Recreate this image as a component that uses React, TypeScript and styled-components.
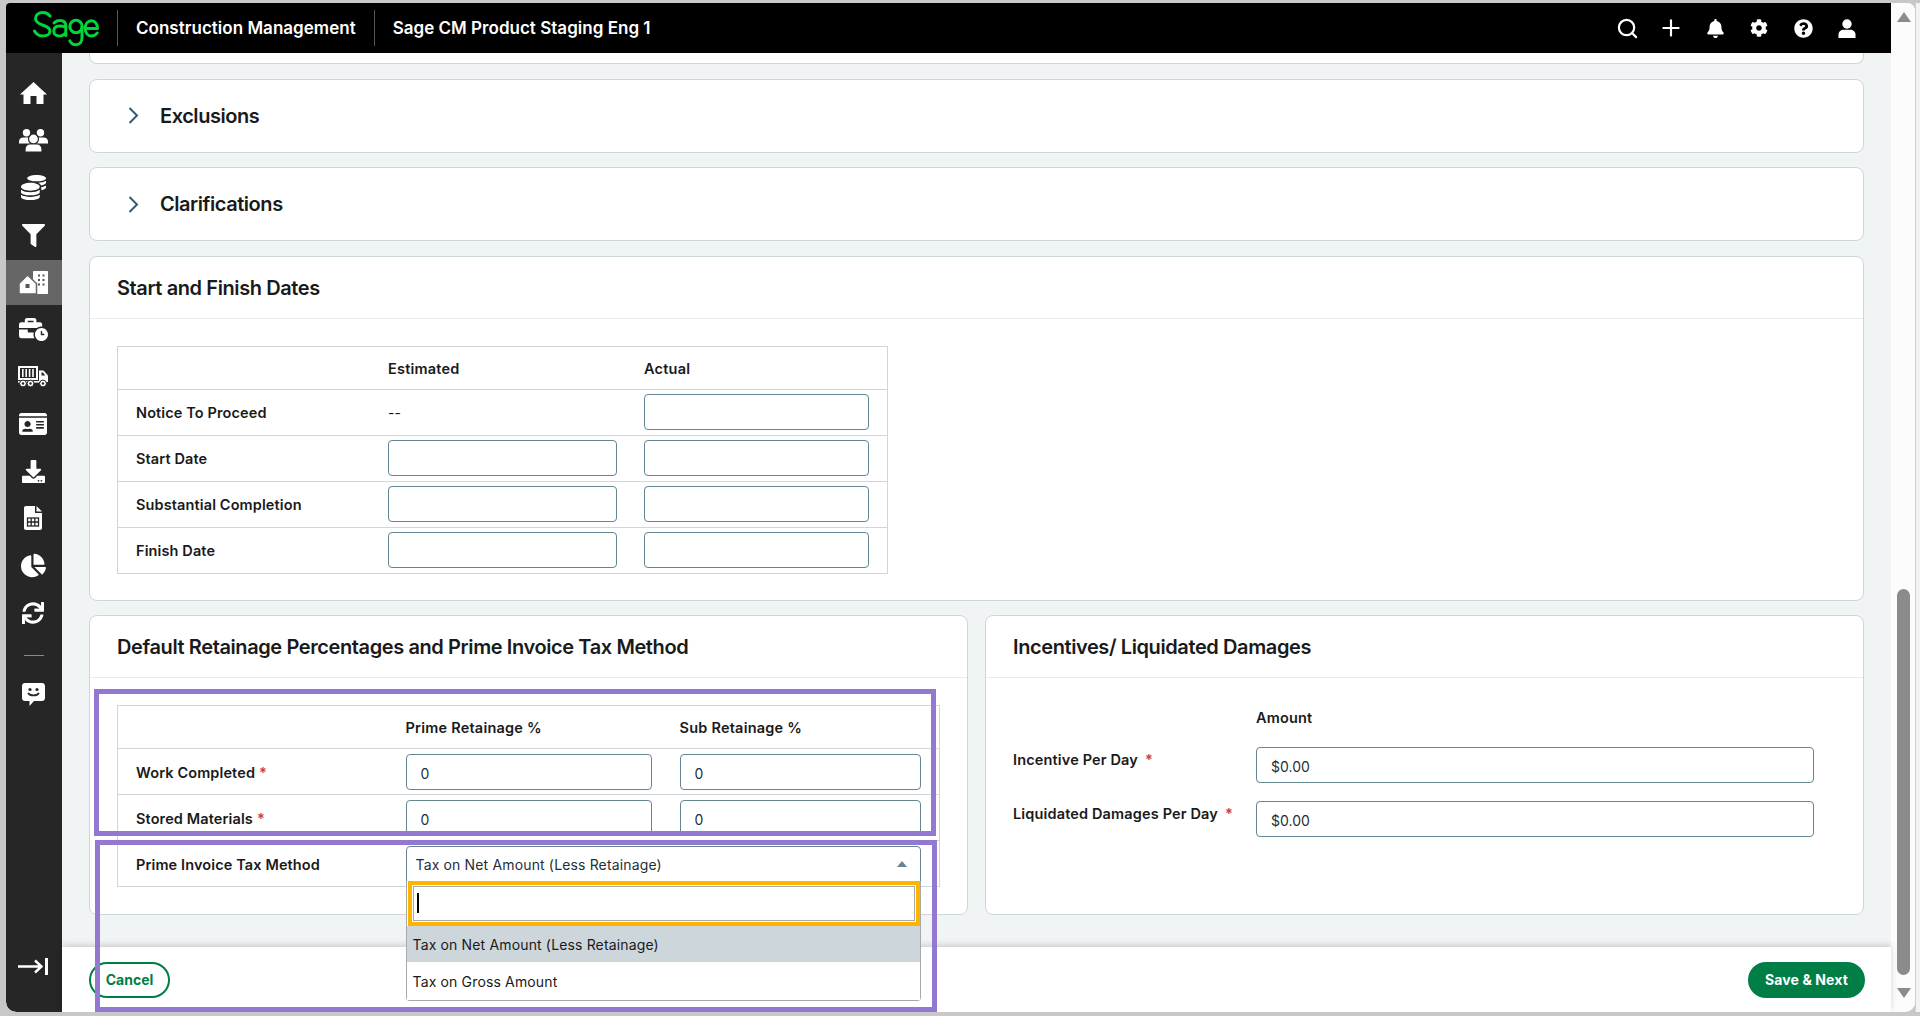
import React from "react";
import styled, { createGlobalStyle } from "styled-components";
import { Search, Plus } from "lucide-react";
import {
  FaCoins, FaFilter, FaBusinessTime, FaIdCard, FaDownload,
  FaChartPie, FaSync, FaBell, FaCog, FaQuestionCircle,
} from "react-icons/fa";

const GlobalStyle = createGlobalStyle`
  html, body { margin: 0; padding: 0; height: 100%; overflow: hidden; }
  body { font-family: Inter, "Open Sans", "Liberation Sans", sans-serif; color: #1a1a1a; }
  * { box-sizing: border-box; }
`;

const Page = styled.div`
  position: relative;
  width: 1920px;
  height: 1016px;
  padding: 3px 0 4px 6px;
  background: #c8c8c8;
  display: flex;
`;
const Win = styled.div`
  width: 1909px;
  display: flex;
  background: #fcfcfc;
  border-radius: 4px 8px 10px 10px;
  overflow: hidden;
`;
const RightEdge = styled.div`
  width: 5px;
  background: #f3f3f3;
  border-left: 1px solid #cfcfcf;
`;
const MainCol = styled.div`
  width: 1885px;
  display: flex;
  flex-direction: column;
`;
const ScrollTrack = styled.div`
  position: relative;
  flex: 1;
  background: #fcfcfc;
  display: flex;
  flex-direction: column;
  align-items: center;
  padding: 9px 0 0 1px;
`;
const ArrowUp = styled.div`
  width: 0;
  height: 0;
  border-left: 7.5px solid transparent;
  border-right: 7.5px solid transparent;
  border-bottom: 10px solid #8b8b8b;
`;
const ArrowDown = styled.div`
  width: 0;
  height: 0;
  margin-top: 13px;
  border-left: 7.5px solid transparent;
  border-right: 7.5px solid transparent;
  border-top: 10px solid #8b8b8b;
`;
const Thumb = styled.div`
  width: 13px;
  height: 386px;
  margin-top: 567px;
  border-radius: 7px;
  background: #8b8b8b;
`;

const Topbar = styled.header`
  height: 50px;
  flex: none;
  background: #000;
  color: #fff;
  display: flex;
  align-items: center;
  padding: 0 22px 0 27px;
`;
const LogoMark = styled.svg`
  width: 66px;
  height: 36px;
  margin-top: 1px;
  flex: none;
`;
const BarDivider = styled.div`
  width: 1px;
  height: 36px;
  background: #555;
  margin: 0 18px;
`;
const BarTitle = styled.span`
  font-size: 17px;
  font-weight: 600;
  letter-spacing: 0.02px;
  white-space: nowrap;
`;
const BarIcons = styled.div`
  margin-left: auto;
  display: flex;
  align-items: center;
`;
const BarIcon = styled.div`
  width: 44px;
  height: 44px;
  display: flex;
  align-items: center;
  justify-content: center;
  color: #fff;
`;

const Body = styled.div`
  flex: 1;
  min-height: 0;
  display: flex;
`;
const Sidebar = styled.nav`
  width: 56px;
  flex: none;
  background: #262626;
  color: #fff;
  border-bottom-left-radius: 10px;
  display: flex;
  flex-direction: column;
  gap: 2.2px;
  padding: 18px 0 23px;
`;
const NavItem = styled.div<{ $active?: boolean }>`
  height: 45px;
  flex: none;
  display: flex;
  align-items: center;
  justify-content: center;
  padding-right: 2px;
  background: ${(p) => (p.$active ? "#666666" : "transparent")};
`;
const NavDivider = styled.div`
  width: 20px;
  height: 1px;
  flex: none;
  margin: 18px auto 14px;
  background: #8a8a8a;
`;
const NavBottom = styled(NavItem)`
  margin-top: auto;
`;

const Content = styled.div`
  flex: 1;
  min-width: 0;
  display: flex;
  flex-direction: column;
`;
const ScrollArea = styled.main`
  height: 894px;
  flex: none;
  background: #f1f4f5;
  padding: 0 27px;
  display: flex;
  flex-direction: column;
  gap: 14.5px;
`;
const CardStub = styled.div`
  height: 11px;
  flex: none;
  background: #fff;
  border: 1px solid #ccd6db;
  border-top: none;
  border-radius: 0 0 8px 8px;
`;
const Accordion = styled.section`
  height: 74px;
  flex: none;
  background: #fff;
  border: 1px solid #ccd6db;
  border-radius: 8px;
  display: flex;
  align-items: center;
  padding-left: 38px;
  gap: 21px;
`;
const AccordionTitle = styled.h3`
  margin: 0;
  font-size: 20px;
  font-weight: 600;
  letter-spacing: -0.45px;
  color: #1a1a1a;
`;
const Card = styled.section<{ $h?: number }>`
  background: #fff;
  border: 1px solid #ccd6db;
  border-radius: 8px;
  flex: none;
  height: ${(p) => (p.$h ? `${p.$h}px` : "auto")};
`;
const CardHeader = styled.div`
  height: 62px;
  padding: 1px 0 0 27px;
  border-bottom: 1px solid #e6ebed;
  display: flex;
  align-items: center;
`;
const CardTitle = styled.h2`
  margin: 0;
  font-size: 20px;
  font-weight: 600;
  letter-spacing: -0.4px;
  color: #1a1a1a;
  white-space: nowrap;
`;
const CardBody = styled.div`
  padding: 27px;
`;
const TwoCards = styled.div`
  display: grid;
  grid-template-columns: 879px 879px;
  gap: 17px;
  height: 299px;
  margin-top: -0.5px;
  flex: none;
`;
const GridTable = styled.div<{ $w: number }>`
  width: ${(p) => p.$w}px;
  border: 1px solid #ccd6db;
  border-bottom: none;
`;
const TRow = styled.div<{ $cols: string; $h: number }>`
  display: grid;
  grid-template-columns: ${(p) => p.$cols};
  height: ${(p) => p.$h}px;
  align-items: center;
  border-bottom: 1px solid #ccd6db;
`;
const RowLabel = styled.div`
  padding: 1px 0 0 18px;
  font-size: 14.5px;
  font-weight: 600;
  letter-spacing: 0.12px;
  white-space: nowrap;
`;
const HeadCell = styled.div`
  padding-top: 1px;
  font-size: 14.5px;
  font-weight: 600;
  letter-spacing: 0.22px;
  white-space: nowrap;
`;
const PlainCell = styled.div`
  font-size: 14px;
`;
const Star = styled.span`
  color: #cd384b;
  margin-left: 4px;
`;
const Field = styled.input<{ $w: number }>`
  display: block;
  width: ${(p) => p.$w}px;
  height: 36px;
  padding: 3px 0 0 14px;
  border: 1px solid #668592;
  border-radius: 4px;
  background: #fff;
  font-family: inherit;
  font-size: 14px;
  color: #1f2f38;
  outline: none;
`;
const SelectWrap = styled.div`
  position: relative;
  width: 515px;
`;
const SelectBox = styled.div`
  height: 36px;
  padding: 1px 0 0 9px;
  border: 1px solid #668592;
  border-radius: 4px 4px 0 0;
  background: #fff;
  display: flex;
  align-items: center;
  font-size: 14px;
  letter-spacing: 0.15px;
  color: #1f2f38;
`;
const Caret = styled.span`
  width: 0;
  height: 0;
  margin-left: auto;
  margin-right: 13px;
  border-left: 5px solid transparent;
  border-right: 5px solid transparent;
  border-bottom: 6px solid #668592;
`;
const Dropdown = styled.div`
  position: absolute;
  z-index: 5;
  left: 0;
  right: 0;
  top: 35px;
  height: 120px;
  background: #fff;
  border: 1px solid #a8a8a8;
  border-top: none;
  border-radius: 0 0 4px 4px;
`;
const SearchOuter = styled.div`
  height: 45px;
  margin-left: 1px;
  border: 4px solid #ffb500;
  padding: 1px;
  background: #fff;
`;
const SearchInner = styled.div`
  height: 100%;
  border: 1px solid #a8a8a8;
  display: flex;
  align-items: center;
  padding-left: 3px;
`;
const TextCursor = styled.span`
  width: 2px;
  height: 20px;
  background: #000;
`;
const Option = styled.div<{ $selected?: boolean; $h: number }>`
  height: ${(p) => p.$h}px;
  display: flex;
  align-items: center;
  padding: 1px 0 0 6px;
  font-size: 14px;
  letter-spacing: 0.15px;
  color: #1a1a1a;
  background: ${(p) => (p.$selected ? "#ccd6db" : "#fff")};
`;
const AmountGrid = styled.div`
  display: grid;
  grid-template-columns: 243px 558px;
  grid-template-rows: 21px 36px 36px;
  row-gap: 18px;
  padding: 30px 0 0 27px;
`;
const AmountHead = styled.div`
  grid-column: 2;
  font-size: 14.5px;
  font-weight: 600;
  line-height: 20px;
  letter-spacing: 0.15px;
`;
const AmountLabel = styled.div`
  grid-column: 1;
  font-size: 14.5px;
  font-weight: 600;
  line-height: 20px;
  padding-top: 3px;
  letter-spacing: 0.15px;
  white-space: nowrap;
`;
const AmountStar = styled(Star)`
  margin-left: 7px;
`;
const Footer = styled.footer`
  position: relative;
  z-index: 1;
  flex: 1;
  background: #fff;
  box-shadow: 0 -2px 6px rgba(0, 0, 0, 0.16);
  display: flex;
  align-items: center;
  justify-content: space-between;
  padding: 0 26px 0 27px;
`;
const PillOutline = styled.button`
  height: 36px;
  width: 81px;
  border: 2px solid #007e45;
  border-radius: 18px;
  background: #fff;
  color: #007e45;
  font-family: inherit;
  font-size: 14px;
  font-weight: 700;
  padding: 0;
`;
const PillSolid = styled.button`
  height: 36px;
  width: 117px;
  border: none;
  border-radius: 18px;
  background: #007e45;
  color: #fff;
  font-family: inherit;
  font-size: 14px;
  font-weight: 700;
  letter-spacing: 0.1px;
  padding: 0;
`;
const Annotation = styled.div<{ $x: number; $y: number; $w: number; $h: number }>`
  position: absolute;
  z-index: 10;
  left: ${(p) => p.$x}px;
  top: ${(p) => p.$y}px;
  width: ${(p) => p.$w}px;
  height: ${(p) => p.$h}px;
  border: 5px solid #9278d0;
  pointer-events: none;
`;

const SageLogo = () => (
  <LogoMark viewBox="0 0 66 36" fill="none" stroke="#00d639" strokeWidth="3" strokeLinecap="round" strokeLinejoin="round">
    <path d="M17 5C15 2.5 12.5 1.5 10 1.5 5.5 1.5 2.5 4 2.5 7.5 2.5 11 5.5 12.5 9.5 14 14 15.5 17 17 17 20 17 23 14 25 10 25 6 25 3 23 1.5 20" />
    <path d="M21 12C22.5 10.3 24.5 9.5 27 9.5 30.5 9.5 32.8 11.5 32.8 15V24.5M32.8 16C30.5 15.3 28.5 15 26.5 15 23 15 20.8 16.8 20.8 20 20.8 23 23 25 26 25 29 25 31.5 23.5 32.8 21.5" />
    <circle cx="43" cy="15.5" r="6.2" />
    <path d="M49 16V26.5C49 31 46.5 33.8 43 33.8 40 33.8 37.8 32.3 36.8 29.8" />
    <path d="M52.2 17.5H64.5C64.5 13 62 9.7 58.4 9.7 54.8 9.7 52.2 13 52.2 17.5 52.2 21.7 54.8 25 58.6 25 60.8 25 62.8 24 64.2 22" />
  </LogoMark>
);

const UserIcon = () => (
  <svg width="18" height="19" viewBox="0 0 18 19" fill="#fff">
    <circle cx="9" cy="5" r="4.7" />
    <path d="M0.5 19V15.5C0.5 12.5 3 10.7 6 10.7H12C15 10.7 17.5 12.5 17.5 15.5V19Z" />
  </svg>
);

const HomeIcon = () => (
  <svg width="27" height="24" viewBox="0 0 27 24" fill="#fff">
    <path d="M13.5 0 27 12.5H23.5V22H16.5V14H10.5V22H3.5V12.5H0Z" />
  </svg>
);

const UsersIcon = () => (
  <svg width="29" height="23" viewBox="0 0 29 23" fill="#fff">
    <circle cx="7.5" cy="3.8" r="3.7" />
    <circle cx="21.5" cy="3.8" r="3.7" />
    <path d="M0 14.5V12.5C0 10 2 8.5 4.5 8.5H10.5C13 8.5 15 10 15 12.5V14.5Z" />
    <path d="M14 14.5V12.5C14 10 16 8.5 18.5 8.5H24.5C27 8.5 29 10 29 12.5V14.5Z" />
    <circle cx="14.5" cy="10" r="5" stroke="#262626" strokeWidth="1.2" />
    <path d="M6 23V20C6 17 8.5 15 11 15H18C20.5 15 23 17 23 20V23Z" stroke="#262626" strokeWidth="1.2" />
  </svg>
);

const BuildingIcon = () => (
  <svg width="29" height="23" viewBox="0 0 29 23" fill="#fff">
    <path d="M14 0.8C14 0.4 14.4 0 14.8 0H28C28.6 0 29 0.4 29 1V22C29 22.6 28.6 23 28 23H14Z" />
    <g fill="#555">
      <rect x="19" y="3.5" width="2" height="2" />
      <rect x="23.5" y="3.5" width="2" height="2" />
      <rect x="19" y="8" width="2" height="2" />
      <rect x="23.5" y="8" width="2" height="2" />
      <rect x="19" y="12.5" width="2" height="2" />
      <rect x="23.5" y="12.5" width="2" height="2" />
    </g>
    <path d="M0 12.5 8.5 4 17.5 12.5V23H1.5C0.6 23 0 22.4 0 21.5Z" stroke="#666" strokeWidth="1.5" />
    <rect x="6.5" y="13" width="4" height="4" fill="#555" rx="0.5" />
  </svg>
);

const TruckIcon = () => (
  <svg width="30" height="21" viewBox="0 0 30 21" fill="#fff">
    <path fillRule="evenodd" d="M1 0H20V14H0V1C0 .4.4 0 1 0ZM2 2V12H18V2Z" />
    <g>
      <rect x="4" y="3" width="1.6" height="8" />
      <rect x="7.4" y="3" width="1.6" height="8" />
      <rect x="10.8" y="3" width="1.6" height="8" />
      <rect x="14.2" y="3" width="1.6" height="8" />
    </g>
    <path d="M21 4.5H25.5L30 9.5V16H21Z" />
    <rect x="0" y="15" width="21" height="1.6" />
    <g stroke="#262626" strokeWidth="1">
      <circle cx="5" cy="17.5" r="3.4" />
      <circle cx="12.5" cy="17.5" r="3.4" />
      <circle cx="25" cy="17.5" r="3.4" />
    </g>
    <g fill="#262626">
      <circle cx="5" cy="17.5" r="1.2" />
      <circle cx="12.5" cy="17.5" r="1.2" />
      <circle cx="25" cy="17.5" r="1.2" />
      <path d="M23.5 6.5H25L27.2 9.5H23.5Z" />
    </g>
  </svg>
);

const FileTableIcon = () => (
  <svg width="18" height="24" viewBox="0 0 18 24" fill="#fff">
    <path d="M2 0H11V6.5C11 7 11.5 7 11.5 7H18V22C18 23.1 17.1 24 16 24H2C.9 24 0 23.1 0 22V2C0 .9.9 0 2 0Z" />
    <path d="M12.5 0 18 5.5H12.5Z" />
    <g fill="none" stroke="#262626" strokeWidth="1.3">
      <rect x="3.5" y="12" width="11" height="8" />
      <path d="M3.5 16H14.5M7.2 12V20M10.8 12V20" />
    </g>
  </svg>
);

const ChatIcon = () => (
  <svg width="23" height="23" viewBox="0 0 23 23" fill="#fff">
    <path d="M3 0H20C21.7 0 23 1.3 23 3V15C23 16.7 21.7 18 20 18H12L7.5 23V18H3C1.3 18 0 16.7 0 15V3C0 1.3 1.3 0 3 0Z" />
    <circle cx="8" cy="6.5" r="1.6" fill="#262626" />
    <circle cx="15" cy="6.5" r="1.6" fill="#262626" />
    <path d="M6.5 10.5C8 13 15 13 16.5 10.5" fill="none" stroke="#262626" strokeWidth="1.8" strokeLinecap="round" />
  </svg>
);

const CollapseIcon = () => (
  <svg width="30" height="17" viewBox="0 0 30 17" fill="none" stroke="#fff" strokeWidth="2.4">
    <path d="M0 8.5H23M17 2.5 23.5 8.5 17 14.5" />
    <path d="M28.5 0V17" strokeWidth="3" />
  </svg>
);

const Chevron = () => (
  <svg width="11" height="17" viewBox="0 0 11 17" fill="none" stroke="#335b70" strokeWidth="2">
    <path d="M1.5 1 9 8.5 1.5 16" />
  </svg>
);

const datesCols = "270px 256px 244px";
const retCols = "287.5px 274px 259.5px";
const taxCols = "287.5px 533.5px";

export default function App() {
  return (
    <Page>
      <GlobalStyle />
      <Win>
        <MainCol>
          <Topbar>
            <SageLogo />
            <BarDivider />
            <BarTitle>Construction Management</BarTitle>
            <BarDivider />
            <BarTitle>Sage CM Product Staging Eng 1</BarTitle>
            <BarIcons>
              <BarIcon><Search size={23} strokeWidth={2.3} /></BarIcon>
              <BarIcon><Plus size={26} strokeWidth={2} /></BarIcon>
              <BarIcon><FaBell size={19} /></BarIcon>
              <BarIcon><FaCog size={18} /></BarIcon>
              <BarIcon><FaQuestionCircle size={19} /></BarIcon>
              <BarIcon><UserIcon /></BarIcon>
            </BarIcons>
          </Topbar>
          <Body>
            <Sidebar>
              <NavItem><HomeIcon /></NavItem>
              <NavItem><UsersIcon /></NavItem>
              <NavItem><FaCoins size={25} /></NavItem>
              <NavItem><FaFilter size={23} /></NavItem>
              <NavItem $active><BuildingIcon /></NavItem>
              <NavItem><FaBusinessTime size={29} /></NavItem>
              <NavItem><TruckIcon /></NavItem>
              <NavItem><FaIdCard size={28} /></NavItem>
              <NavItem><FaDownload size={23} /></NavItem>
              <NavItem><FileTableIcon /></NavItem>
              <NavItem><FaChartPie size={25} /></NavItem>
              <NavItem><FaSync size={22} /></NavItem>
              <NavDivider />
              <NavItem><ChatIcon /></NavItem>
              <NavBottom><CollapseIcon /></NavBottom>
            </Sidebar>
            <Content>
              <ScrollArea>
                <CardStub />
                <Accordion><Chevron /><AccordionTitle>Exclusions</AccordionTitle></Accordion>
                <Accordion><Chevron /><AccordionTitle>Clarifications</AccordionTitle></Accordion>
                <Card $h={345.5}>
                  <CardHeader><CardTitle>Start and Finish Dates</CardTitle></CardHeader>
                  <CardBody>
                    <GridTable $w={771}>
                      <TRow $cols={datesCols} $h={43}>
                        <div />
                        <HeadCell>Estimated</HeadCell>
                        <HeadCell>Actual</HeadCell>
                      </TRow>
                      <TRow $cols={datesCols} $h={46}>
                        <RowLabel>Notice To Proceed</RowLabel>
                        <PlainCell>--</PlainCell>
                        <Field $w={225} readOnly />
                      </TRow>
                      <TRow $cols={datesCols} $h={46}>
                        <RowLabel>Start Date</RowLabel>
                        <Field $w={229} readOnly />
                        <Field $w={225} readOnly />
                      </TRow>
                      <TRow $cols={datesCols} $h={46}>
                        <RowLabel>Substantial Completion</RowLabel>
                        <Field $w={229} readOnly />
                        <Field $w={225} readOnly />
                      </TRow>
                      <TRow $cols={datesCols} $h={46}>
                        <RowLabel>Finish Date</RowLabel>
                        <Field $w={229} readOnly />
                        <Field $w={225} readOnly />
                      </TRow>
                    </GridTable>
                  </CardBody>
                </Card>
                <TwoCards>
                  <Card>
                    <CardHeader><CardTitle>Default Retainage Percentages and Prime Invoice Tax Method</CardTitle></CardHeader>
                    <CardBody>
                      <GridTable $w={823}>
                        <TRow $cols={retCols} $h={43}>
                          <div />
                          <HeadCell>Prime Retainage %</HeadCell>
                          <HeadCell>Sub Retainage %</HeadCell>
                        </TRow>
                        <TRow $cols={retCols} $h={46}>
                          <RowLabel>Work Completed<Star>*</Star></RowLabel>
                          <Field $w={246} value="0" readOnly />
                          <Field $w={241} value="0" readOnly />
                        </TRow>
                        <TRow $cols={retCols} $h={46}>
                          <RowLabel>Stored Materials<Star>*</Star></RowLabel>
                          <Field $w={246} value="0" readOnly />
                          <Field $w={241} value="0" readOnly />
                        </TRow>
                        <TRow $cols={taxCols} $h={46}>
                          <RowLabel>Prime Invoice Tax Method</RowLabel>
                          <SelectWrap>
                            <SelectBox>
                              Tax on Net Amount (Less Retainage)
                              <Caret />
                            </SelectBox>
                            <Dropdown>
                              <SearchOuter>
                                <SearchInner><TextCursor /></SearchInner>
                              </SearchOuter>
                              <Option $selected $h={36.5}>Tax on Net Amount (Less Retainage)</Option>
                              <Option $h={37.5}>Tax on Gross Amount</Option>
                            </Dropdown>
                          </SelectWrap>
                        </TRow>
                      </GridTable>
                    </CardBody>
                  </Card>
                  <Card>
                    <CardHeader><CardTitle>Incentives/ Liquidated Damages</CardTitle></CardHeader>
                    <AmountGrid>
                      <AmountHead>Amount</AmountHead>
                      <AmountLabel>Incentive Per Day<AmountStar>*</AmountStar></AmountLabel>
                      <Field $w={558} value="$0.00" readOnly />
                      <AmountLabel>Liquidated Damages Per Day<AmountStar>*</AmountStar></AmountLabel>
                      <Field $w={558} value="$0.00" readOnly />
                    </AmountGrid>
                  </Card>
                </TwoCards>
              </ScrollArea>
              <Footer>
                <PillOutline>Cancel</PillOutline>
                <PillSolid>Save &amp; Next</PillSolid>
              </Footer>
            </Content>
          </Body>
        </MainCol>
        <ScrollTrack>
          <ArrowUp />
          <Thumb />
          <ArrowDown />
        </ScrollTrack>
      </Win>
      <RightEdge />
      <Annotation $x={94} $y={689} $w={842} $h={147} />
      <Annotation $x={95} $y={840} $w={842} $h={172} />
    </Page>
  );
}
